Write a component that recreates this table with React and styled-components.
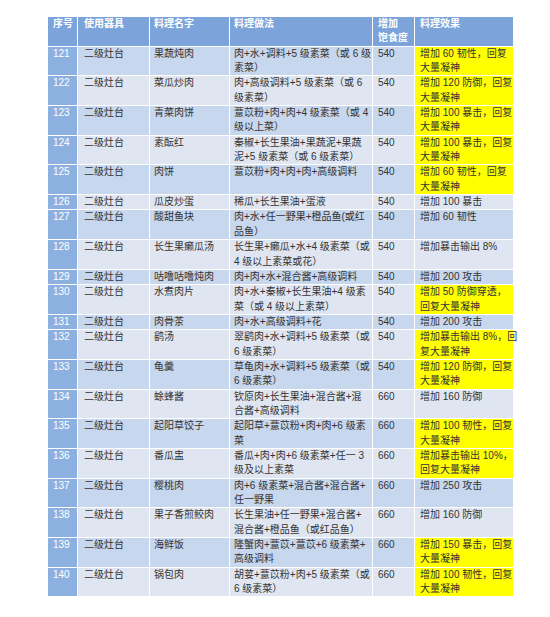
import React from 'react';
import styled, { createGlobalStyle } from 'styled-components';

const GlobalStyle = createGlobalStyle`
  html, body {
    margin: 0;
    padding: 0;
    background: #ffffff;
  }
  body {
    font-family: 'Liberation Sans', 'Noto Sans CJK SC', sans-serif;
  }
`;

const Page = styled.div`
  padding: 17px 0 0 48px;
`;

const Table = styled.div`
  display: grid;
  grid-template-columns: 29px 71px 79px 142px 41px 98px;
  gap: 1px;
  width: 465px;
  background: #ffffff;
  font-size: 10px;
  line-height: 14.35px;
  color: #333333;
`;

const tones = {
  head: '#7ca4da',
  index: '#8cb1e1',
  dark: '#c7d7ee',
  light: '#dfe6f2',
  yellow: '#ffff00',
};

const Cell = styled.div`
  background: ${({ $tone }) => tones[$tone]};
  padding: 0 0 0 ${({ $pad }) => $pad || 5}px;
  color: ${({ $tone }) => ($tone === 'head' || $tone === 'index' ? '#ffffff' : '#333333')};
  font-weight: ${({ $tone }) => ($tone === 'head' ? 700 : 400)};
`;

const Line = styled.div`
  white-space: pre;
`;

const rows = [
  ['121', '果蔬炖肉', ['肉+水+调料+5 级素菜（或 6 级', '素菜）'], '540', ['增加 60 韧性，回复', '大量凝神'], true],
  ['122', '菜瓜炒肉', ['肉+高级调料+5 级素菜（或 6', '级素菜）'], '540', ['增加 120 防御，回复', '大量凝神'], true],
  ['123', '青菜肉饼', ['薏苡粉+肉+肉+4 级素菜（或 4', '级以上菜）'], '540', ['增加 100 暴击，回复', '大量凝神'], true],
  ['124', '素酝红', ['秦椒+长生果油+果蔬泥+果蔬', '泥+5 级素菜（或 6 级素菜）'], '540', ['增加 100 暴击，回复', '大量凝神'], true],
  ['125', '肉饼', ['薏苡粉+肉+肉+肉+高级调料', ' '], '540', ['增加 60 韧性，回复', '大量凝神'], true],
  ['126', '瓜皮炒蛋', ['稀瓜+长生果油+蛋液'], '540', ['增加 100 暴击'], false],
  ['127', '酸甜鱼块', ['肉+水+任一野果+橙品鱼(或红', '品鱼）'], '540', ['增加 60 韧性'], false],
  ['128', '长生果癞瓜汤', ['长生果+癞瓜+水+4 级素菜（或', '4 级以上素菜或花）'], '540', ['增加暴击输出 8%'], false],
  ['129', '咕噜咕噜炖肉', ['肉+肉+水+混合酱+高级调料'], '540', ['增加 200 攻击'], false],
  ['130', '水煮肉片', ['肉+水+秦椒+长生果油+4 级素', '菜（或 4 级以上素菜）'], '540', ['增加 50 防御穿透，', '回复大量凝神'], true],
  ['131', '肉骨茶', ['肉+水+高级调料+花'], '540', ['增加 200 攻击'], false],
  ['132', '鹞汤', ['翠鹞肉+水+调料+5 级素菜（或', '6 级素菜）'], '540', ['增加暴击输出 8%，回', '复大量凝神'], true],
  ['133', '龟羹', ['草龟肉+水+调料+5 级素菜（或', '6 级素菜）'], '540', ['增加 120 防御，回复', '大量凝神'], true],
  ['134', '蜍蜂酱', ['钦原肉+长生果油+混合酱+混', '合酱+高级调料'], '660', ['增加 160 防御'], false],
  ['135', '起阳草饺子', ['起阳草+薏苡粉+肉+肉+6 级素', '菜'], '660', ['增加 100 韧性，回复', '大量凝神'], true],
  ['136', '番瓜盅', ['番瓜+肉+肉+6 级素菜+任一 3', '级及以上素菜'], '660', ['增加暴击输出 10%，', '回复大量凝神'], true],
  ['137', '樱桃肉', ['肉+6 级素菜+混合酱+混合酱+', '任一野果'], '660', ['增加 250 攻击'], false],
  ['138', '果子香煎鲛肉', ['长生果油+任一野果+混合酱+', '混合酱+橙品鱼（或红品鱼）'], '660', ['增加 160 防御'], false],
  ['139', '海鲜饭', ['隆蟹肉+薏苡+薏苡+6 级素菜+', '高级调料'], '660', ['增加 150 暴击，回复', '大量凝神'], true],
  ['140', '锅包肉', ['胡荽+薏苡粉+肉+5 级素菜（或', '6 级素菜）'], '660', ['增加 100 韧性，回复', '大量凝神'], true],
];

const Lines = ({ items }) => items.map((t, i) => <Line key={i}>{t}</Line>);

export default function App() {
  return (
    <Page>
      <GlobalStyle />
      <Table>
        <Cell $tone="head">序号</Cell>
        <Cell $tone="head" $pad={6}>使用器具</Cell>
        <Cell $tone="head" $pad={4}>料理名字</Cell>
        <Cell $tone="head" $pad={4}>料理做法</Cell>
        <Cell $tone="head"><Lines items={['增加', '饱食度']} /></Cell>
        <Cell $tone="head">料理效果</Cell>
        {rows.map(([no, name, method, food, effect, hi], i) => {
          const tone = i % 2 === 0 ? 'dark' : 'light';
          return (
            <React.Fragment key={no}>
              <Cell $tone="index">{no}</Cell>
              <Cell $tone={tone} $pad={6}>二级灶台</Cell>
              <Cell $tone={tone} $pad={4}>{name}</Cell>
              <Cell $tone={tone} $pad={4}><Lines items={method} /></Cell>
              <Cell $tone={tone}>{food}</Cell>
              <Cell $tone={hi ? 'yellow' : tone}><Lines items={effect} /></Cell>
            </React.Fragment>
          );
        })}
      </Table>
    </Page>
  );
}
